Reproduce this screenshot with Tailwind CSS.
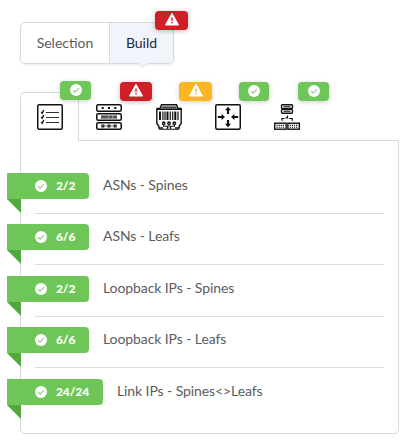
<!DOCTYPE html>
<html lang="en">
<head>
<meta charset="utf-8">
<title>Build</title>
<script src="https://cdn.jsdelivr.net/npm/@tailwindcss/browser@4"></script>
</head>
<body class="bg-white font-['Lato',sans-serif] text-[14px] leading-[18px] text-[#5b5c5e] overflow-hidden">
<svg class="hidden">
  <symbol id="check" viewBox="0 0 12 12"><circle cx="6" cy="6" r="6" fill="#fff"/><path d="M3.2 6.2 5.2 8.1 8.9 4.2" fill="none" stroke="#98cb86" stroke-width="1.2"/></symbol>
  <symbol id="warn" viewBox="0 0 14 13"><path d="M7 .8 13.2 11.8H.8Z" fill="#fff" stroke="#fff" stroke-width="1.4" stroke-linejoin="round"/><path d="M7 4.6v3.4M7 9v1.6" stroke="currentColor" stroke-width="1.4"/></symbol>
</svg>
<main class="w-[410px] h-[444px] pt-[22px] pl-5">
  <nav class="relative flex w-[154px] h-[42px] rounded-[5px] border border-[#d9dadc] shadow-[0_1px_2px_#22242618]">
    <div class="flex w-[89px] items-center justify-center border-r border-[#d9dadc]">Selection</div>
    <div class="relative flex flex-1 items-center justify-center rounded-r bg-[#f1f4fa] text-[#1b2a40]">Build
      <span class="absolute -bottom-[4px] left-[29px] size-[7px] rotate-45 border-r border-b border-[#e8e9eb] bg-[#f1f4fa]"></span>
    </div>
    <span class="absolute left-[134px] -top-[12px] flex h-[19px] w-[33px] items-center justify-center rounded bg-[#d01f27] pb-[2px] text-[#d01f27] shadow-[0_1px_5px_#0004]"><svg class="h-[13px] w-[14px]"><use href="#warn"/></svg></span>
  </nav>

  <div class="relative mt-7 flex h-[49px]">
    <div class="relative z-10 w-[59px] rounded-t-[5px] border border-b-0 border-[#d9dadc] bg-white pl-4 pt-[11px]">
      <svg class="size-[26px]" viewBox="0 0 26 26" fill="none" stroke="#111">
        <rect x=".75" y=".75" width="24.5" height="24.5" rx="1.5" stroke-width="1.5"/>
        <path d="M9 8.5h13M9 13.5h13M9 18.5h13" stroke="#333" stroke-width="1.1"/>
        <path d="m4.2 8 1 1.2L6.8 6M4.2 13l1 1.2L6.8 11M4.2 18l1 1.2L6.8 16" stroke-width="1.4"/>
      </svg>
      <span class="absolute left-[39px] -top-[12px] flex h-[19px] w-[31px] items-center justify-center rounded bg-[#6fc658] pb-[2px] shadow-[0_1px_5px_#0003]"><svg class="size-3"><use href="#check"/></svg></span>
    </div>
    <div class="relative w-[60px] pl-[17px] pt-3">
      <svg class="size-[26px]" viewBox="0 0 26 26" fill="none" stroke="#111" stroke-width="1.5">
        <rect x=".75" y=".75" width="24.5" height="6.5" rx="1.5"/><rect x=".75" y="9.75" width="24.5" height="6.5" rx="1.5"/><rect x=".75" y="18.75" width="24.5" height="6.5" rx="1.5"/>
        <path d="M5.7 4h2M12 4h2M18.3 4h2" stroke-width="2"/>
        <path d="M5 13h16" stroke="#555" stroke-width="3.2"/><path d="M12.5 11.2v3.6M16.5 11.2v3.6" stroke="#bbb" stroke-width=".7"/>
        <path d="M5 22h16" stroke-width=".6"/><path d="M5.5 22h2.8M11.6 22h2.8M17.7 22h2.8" stroke-width="2.8"/><path d="M6.4 22h1M12.5 22h1M18.6 22h1" stroke="#aaa" stroke-width="1"/>
      </svg>
      <span class="absolute left-[41px] -top-[10px] flex h-[19px] w-[32px] items-center justify-center rounded bg-[#d01f27] pb-[2px] text-[#d01f27] shadow-[0_1px_5px_#0004]"><svg class="h-[13px] w-[14px]"><use href="#warn"/></svg></span>
    </div>
    <div class="relative w-[59px] pl-[17px] pt-3">
      <svg class="size-[26px]" viewBox="0 0 26 26" fill="none" stroke="#111" stroke-width="1.4">
        <path d="M1 5.5V4.5h3l1.5-3.8h15L22 4.5h3v1"/><path d="M5.5 3.4h15" stroke="#444" stroke-width="2"/>
        <path d="M.8 5.3h24.4v14.2l-2 2.5v2h-4.2M.8 5.3v14.2l2 2.5v2H7"/>
        <path d="M4 7.5v8.5M11.5 7.5v8.5M19.3 7.5v8.5" stroke-width="2"/><path d="M6.9 7.5v8.5M9 7.5v8.5M14.3 7.5v8.5M16.7 7.5v8.5M22 7.5v8.5" stroke-width="1.2"/>
        <circle cx="7.7" cy="19.2" r="1.2"/><circle cx="13" cy="19.2" r="1.2"/><circle cx="18.3" cy="19.2" r="1.2"/>
        <path d="M7.7 20.5v1.8h3.8v2.5M13 20.5v3M18.3 20.5v1.8h-3.8v2.5M3 25.2h20" stroke-width="1.1"/>
      </svg>
      <span class="absolute left-[40px] -top-[10px] flex h-[19px] w-[33px] items-center justify-center rounded bg-[#fdb521] pb-[2px] text-[#f5b435] shadow-[0_1px_5px_#0003]"><svg class="h-[13px] w-[14px]"><use href="#warn"/></svg></span>
    </div>
    <div class="relative w-[59px] pl-[17px] pt-3">
      <svg class="size-[26px]" viewBox="0 0 26 26">
        <rect x=".75" y=".75" width="24.5" height="24.5" rx="1.5" fill="none" stroke="#111" stroke-width="1.5"/>
        <g fill="#111"><path d="M13 2.8 16 6.2H14.1V10H11.9V6.2H10Z"/><path d="M13 23.2 16 19.8H14.1V16H11.9V19.8H10Z"/><path d="M10 13 6.6 10V12H2.8v2h3.8v2ZM16 13l3.4-3V12H23.2v2h-3.8v2Z"/></g>
      </svg>
      <span class="absolute left-[41px] -top-[10px] flex h-[19px] w-[30px] items-center justify-center rounded bg-[#6fc658] pb-[2px] shadow-[0_1px_5px_#0003]"><svg class="size-3"><use href="#check"/></svg></span>
    </div>
    <div class="relative w-[60px] pl-[17px] pt-3">
      <svg class="size-[26px]" viewBox="0 0 26 26" fill="none" stroke="#111" stroke-width="1.4">
        <rect x="7.5" y=".7" width="11" height="3.8" rx="1"/><rect x="7.5" y="5.4" width="11" height="3.8" rx="1"/>
        <path d="M9.5 2.6h7M9.5 7.3h7" stroke="#444" stroke-width="1.4"/>
        <path d="M13.5 11.5v2.3h-2M8 16.8v-2.3h2.5M15 14.5h3.2v2.3" stroke-width="1.2"/>
        <rect x=".7" y="19.2" width="11.4" height="6"/><rect x="13.9" y="19.2" width="11.4" height="6"/>
        <path d="M2.5 21.4h8M15.7 21.4h8M2.5 23.3h8M15.7 23.3h8" stroke-width="1.1" stroke-dasharray="1.2 .9"/>
      </svg>
      <span class="absolute left-[41px] -top-[10px] flex h-[19px] w-[31px] items-center justify-center rounded bg-[#6fc658] pb-[2px] shadow-[0_1px_5px_#0003]"><svg class="size-3"><use href="#check"/></svg></span>
    </div>
  </div>

  <section class="-mt-px flex h-[294px] w-[379px] flex-col rounded-b-[5px] border border-[#d9dadc] px-[14px] pt-[21.4px] tracking-[-0.09px]">
    <div class="flex h-[51.4px] shrink-0 border-b border-[#dcddde] pt-[10.6px]">
      <div class="relative -ml-7 flex h-[26px] w-[82px] items-center gap-[9px] rounded-r bg-[#6fc658] pl-7 text-[12px] font-black text-white"><svg class="size-3"><use href="#check"/></svg>2/2<svg class="absolute left-0 top-[26px] h-[14px] w-[14px]"><path d="M0 0h14v14Z" fill="#51a83c"/></svg></div>
      <div class="ml-[14px] pt-[3px]">ASNs - Spines</div>
    </div>
    <div class="flex h-[51.4px] shrink-0 border-b border-[#dcddde] pt-[10.6px]">
      <div class="relative -ml-7 flex h-[26px] w-[82px] items-center gap-[9px] rounded-r bg-[#6fc658] pl-7 text-[12px] font-black text-white"><svg class="size-3"><use href="#check"/></svg>6/6<svg class="absolute left-0 top-[26px] h-[14px] w-[14px]"><path d="M0 0h14v14Z" fill="#51a83c"/></svg></div>
      <div class="ml-[14px] pt-[3px]">ASNs - Leafs</div>
    </div>
    <div class="flex h-[51.4px] shrink-0 border-b border-[#dcddde] pt-[10.6px]">
      <div class="relative -ml-7 flex h-[26px] w-[82px] items-center gap-[9px] rounded-r bg-[#6fc658] pl-7 text-[12px] font-black text-white"><svg class="size-3"><use href="#check"/></svg>2/2<svg class="absolute left-0 top-[26px] h-[14px] w-[14px]"><path d="M0 0h14v14Z" fill="#51a83c"/></svg></div>
      <div class="ml-[14px] pt-[3px]">Loopback IPs - Spines</div>
    </div>
    <div class="flex h-[51.4px] shrink-0 border-b border-[#dcddde] pt-[10.6px]">
      <div class="relative -ml-7 flex h-[26px] w-[82px] items-center gap-[9px] rounded-r bg-[#6fc658] pl-7 text-[12px] font-black text-white"><svg class="size-3"><use href="#check"/></svg>6/6<svg class="absolute left-0 top-[26px] h-[14px] w-[14px]"><path d="M0 0h14v14Z" fill="#51a83c"/></svg></div>
      <div class="ml-[14px] pt-[3px]">Loopback IPs - Leafs</div>
    </div>
    <div class="flex h-[51.4px] shrink-0 pt-[10.6px]">
      <div class="relative -ml-7 flex h-[26px] w-[96px] items-center gap-[9px] rounded-r bg-[#6fc658] pl-7 text-[12px] font-black text-white"><svg class="size-3"><use href="#check"/></svg>24/24<svg class="absolute left-0 top-[26px] h-[14px] w-[14px]"><path d="M0 0h14v14Z" fill="#51a83c"/></svg></div>
      <div class="ml-[14px] pt-[3px]">Link IPs - Spines&lt;&gt;Leafs</div>
    </div>
  </section>
</main>
</body>
</html>
